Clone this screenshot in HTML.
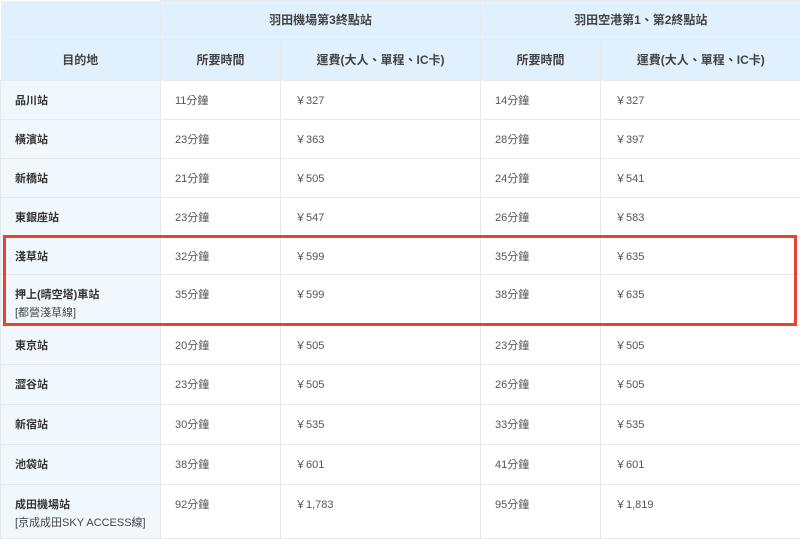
<!DOCTYPE html>
<html><head><meta charset="utf-8"><style>
body{margin:0;background:#fff;width:800px;height:540px;overflow:hidden;font-family:"Liberation Sans","Noto Sans CJK TC",sans-serif;}
table{border-collapse:collapse;width:800px;table-layout:fixed;font-size:11px;color:#555;}
td,th{border:1px solid #e6e9ec;padding:0 14px;vertical-align:top;line-height:18px;}
th{background:#e0f0fc;color:#444;font-weight:bold;text-align:center;vertical-align:middle;font-size:12px;}
td{padding-top:11px;}
td.d{background:#f1f8fd;color:#333;font-weight:bold;}
td.d span{font-weight:normal;color:#444}
.box{position:absolute;left:3px;top:235px;width:788px;height:85px;border:3px solid #e8432e;}
</style></head><body>
<table>
<colgroup><col style="width:160px"><col style="width:120px"><col style="width:200px"><col style="width:120px"><col style="width:200px"></colgroup>
<tr style="height:39px"><th style="border-top:none;border-left:none"></th><th colspan="2">羽田機場第3終點站</th><th colspan="2" style="border-right:none">羽田空港第1、第2終點站</th></tr>
<tr style="height:41px"><th style="border-left:none">目的地</th><th>所要時間</th><th>運費(大人、單程、IC卡)</th><th>所要時間</th><th style="border-right:none">運費(大人、單程、IC卡)</th></tr>
<tr style="height:39px"><td class="d">品川站</td><td>11分鐘</td><td>￥327</td><td>14分鐘</td><td>￥327</td></tr>
<tr style="height:39px"><td class="d">橫濱站</td><td>23分鐘</td><td>￥363</td><td>28分鐘</td><td>￥397</td></tr>
<tr style="height:39px"><td class="d">新橋站</td><td>21分鐘</td><td>￥505</td><td>24分鐘</td><td>￥541</td></tr>
<tr style="height:39px"><td class="d">東銀座站</td><td>23分鐘</td><td>￥547</td><td>26分鐘</td><td>￥583</td></tr>
<tr style="height:38px"><td class="d">淺草站</td><td>32分鐘</td><td>￥599</td><td>35分鐘</td><td>￥635</td></tr>
<tr style="height:51px"><td class="d">押上(晴空塔)車站<br><span>[都營淺草線]</span></td><td>35分鐘</td><td>￥599</td><td>38分鐘</td><td>￥635</td></tr>
<tr style="height:39px"><td class="d">東京站</td><td>20分鐘</td><td>￥505</td><td>23分鐘</td><td>￥505</td></tr>
<tr style="height:40px"><td class="d">澀谷站</td><td>23分鐘</td><td>￥505</td><td>26分鐘</td><td>￥505</td></tr>
<tr style="height:40px"><td class="d">新宿站</td><td>30分鐘</td><td>￥535</td><td>33分鐘</td><td>￥535</td></tr>
<tr style="height:40px"><td class="d">池袋站</td><td>38分鐘</td><td>￥601</td><td>41分鐘</td><td>￥601</td></tr>
<tr style="height:54px"><td class="d">成田機場站<br><span>[京成成田SKY ACCESS線]</span></td><td>92分鐘</td><td>￥1,783</td><td>95分鐘</td><td>￥1,819</td></tr>
</table>
<div class="box"></div>
</body></html>
